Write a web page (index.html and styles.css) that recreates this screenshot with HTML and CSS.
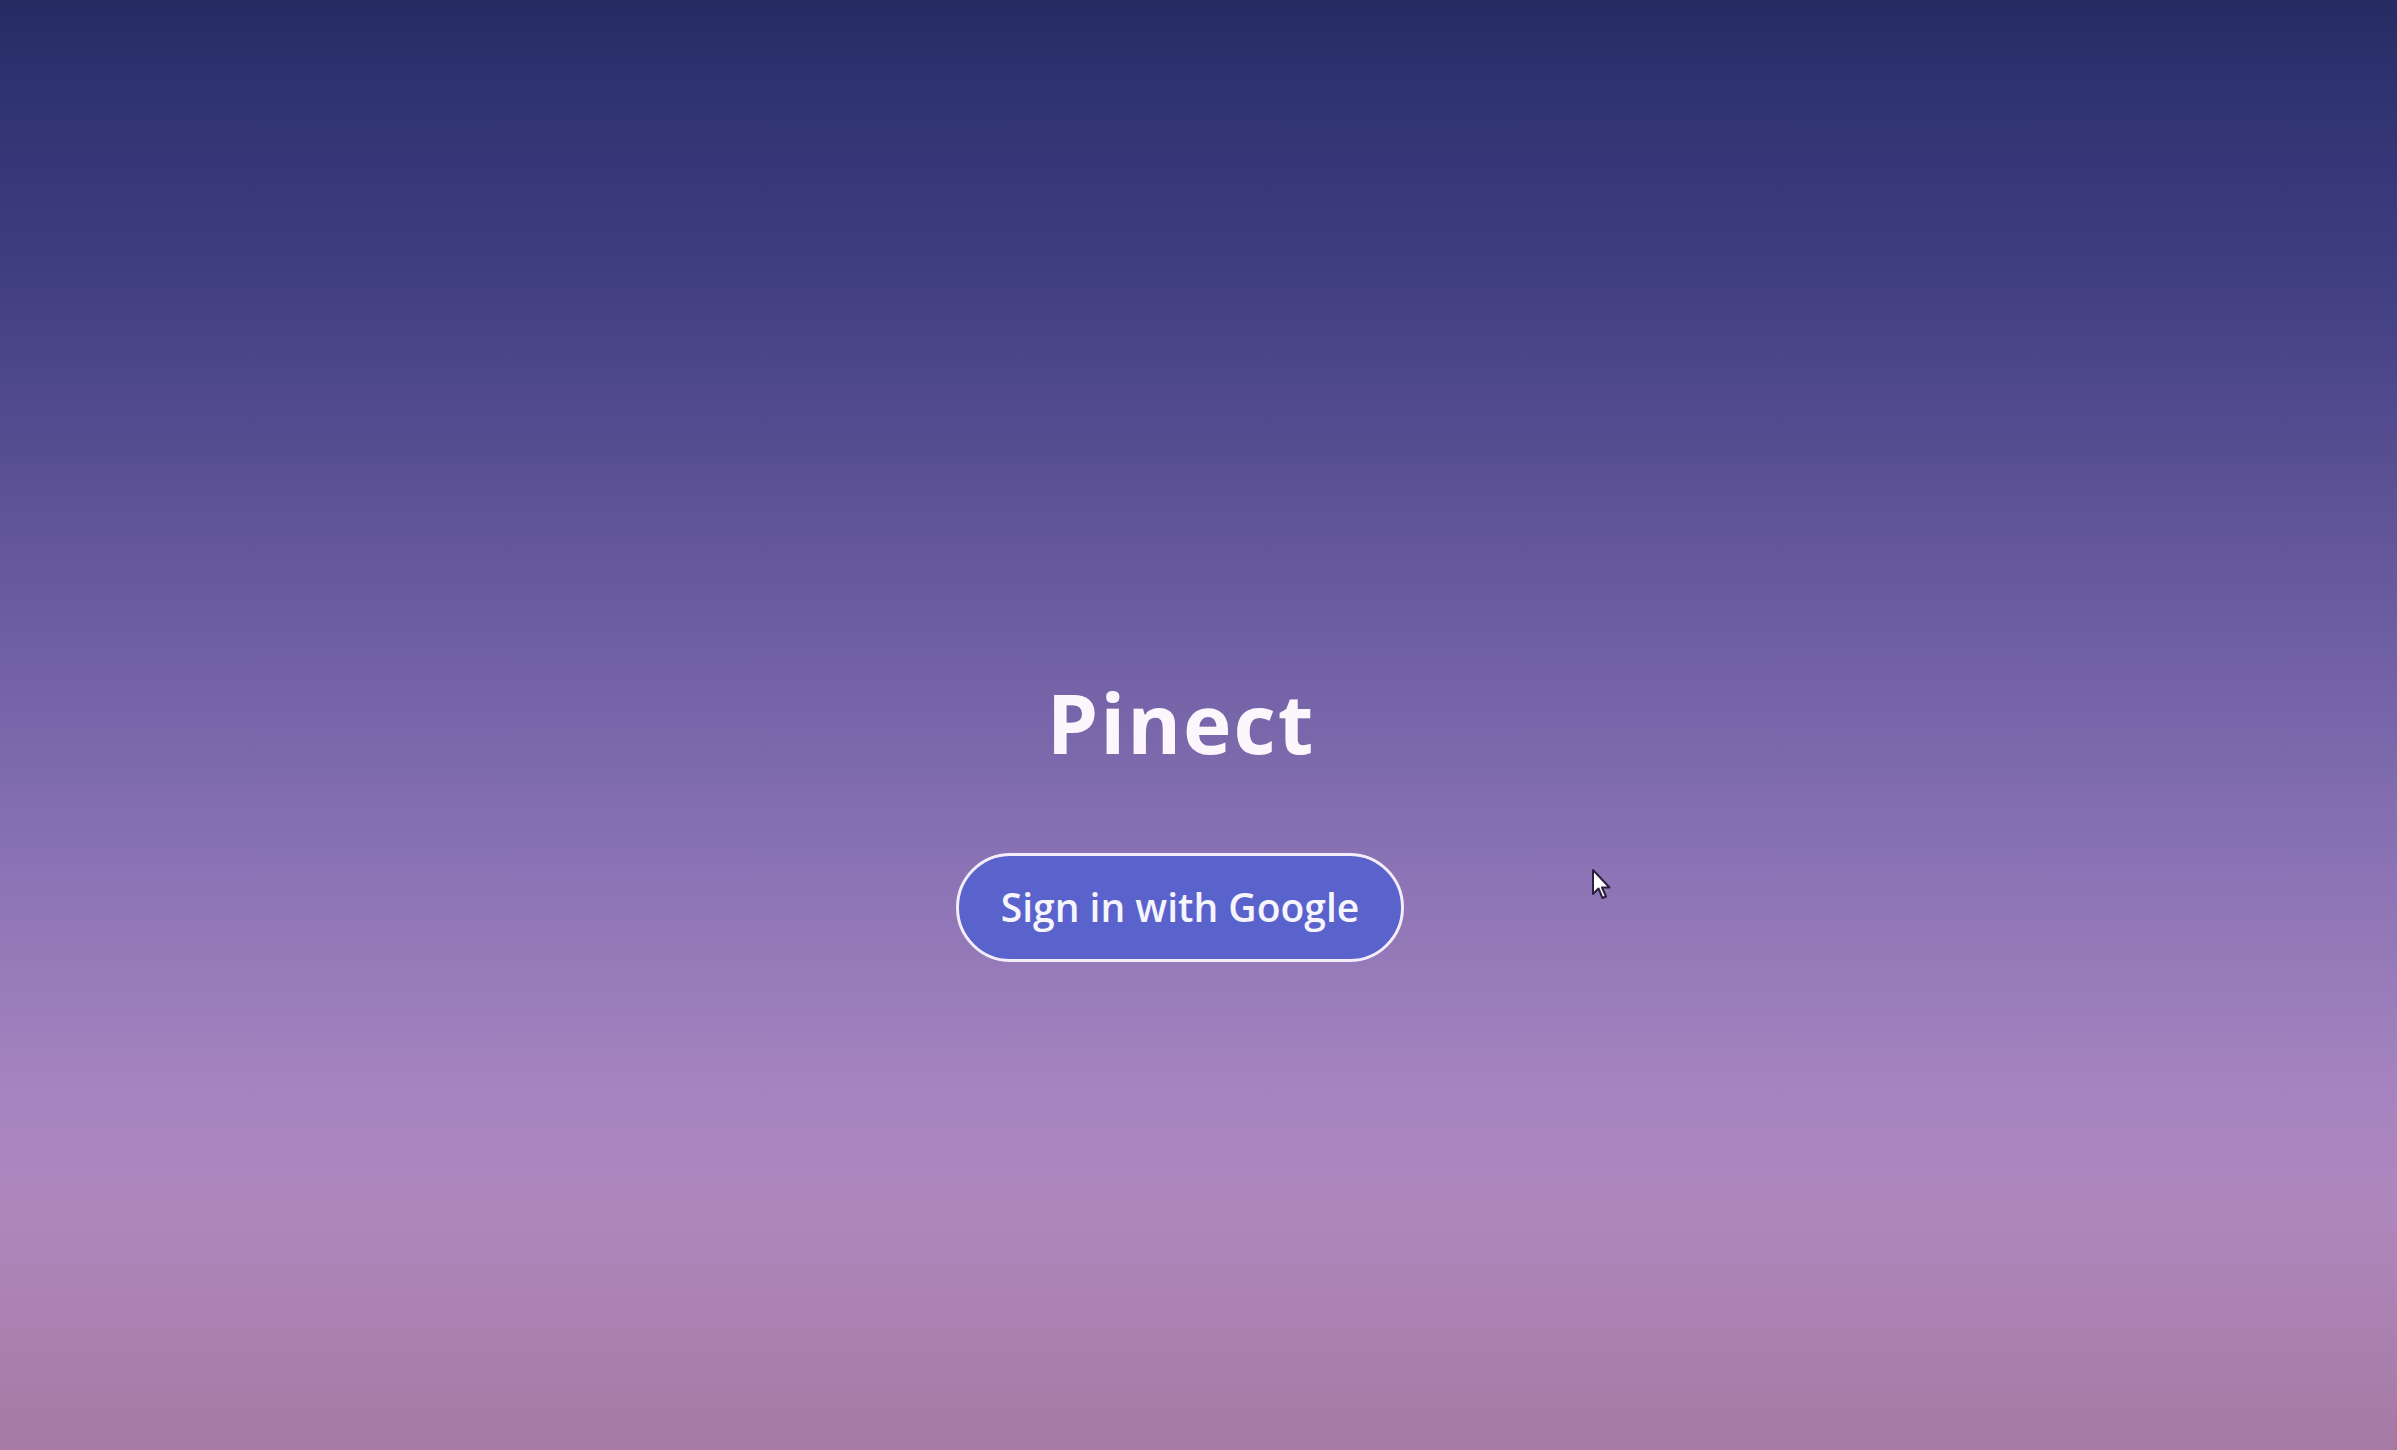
FILE: index.html
```html
<!DOCTYPE html>
<html lang="en">
<head>
<meta charset="utf-8">
<title>Pinect</title>
<link rel="stylesheet" href="styles.css">
</head>
<body>
<main class="landing">
  <h1 class="brand">Pinect</h1>
  <button class="google-btn" type="button">Sign in with Google</button>
</main>
<svg class="cursor" width="22" height="34" viewBox="0 0 22 34" aria-hidden="true">
  <path d="M2 2 L2 26 L7.5 20.5 L11.5 30 L15 28.5 L11 19.5 L18.5 19.5 Z" fill="#ffffff" stroke="#2a1f3d" stroke-width="2" stroke-linejoin="round"/>
</svg>
</body>
</html>
```

FILE: styles.css
```css
html, body {
  margin: 0;
  padding: 0;
  height: 100%;
}

body {
  min-height: 1450px;
  background: linear-gradient(180deg,
    #262b62 0%,
    #2f3270 6%,
    #3d3c80 17%,
    #4d478b 26%,
    #5e5396 35%,
    #6e5ea2 44%,
    #7b69ac 52%,
    #8b73b5 60%,
    #9a7dbb 69%,
    #a784c0 76%,
    #ae87bd 83%,
    #ab82b2 90%,
    #a57aa3 100%);
  font-family: "Open Sans", "Liberation Sans", sans-serif;
  position: relative;
  overflow: hidden;
}

.landing {
  display: flex;
  flex-direction: column;
  align-items: center;
  padding-top: 681px;
  padding-right: 37px;
}

.brand {
  margin: 0;
  font-size: 82px;
  line-height: 1;
  font-weight: 700;
  color: #fbf7fd;
  letter-spacing: 2px;
  text-indent: 2px;
}

.google-btn {
  margin-top: 90px;
  box-sizing: border-box;
  width: 448px;
  height: 109px;
  border: 3px solid #f4ecf8;
  border-radius: 55px;
  background: #5a62cc;
  color: #f6f4fc;
  font-family: "Open Sans", "Liberation Sans", sans-serif;
  font-size: 39px;
  font-weight: 600;
  line-height: 1;
  display: flex;
  align-items: center;
  justify-content: center;
  padding: 0 0 2px 0;
  cursor: pointer;
}

.cursor {
  position: absolute;
  left: 1591px;
  top: 868px;
}
```
